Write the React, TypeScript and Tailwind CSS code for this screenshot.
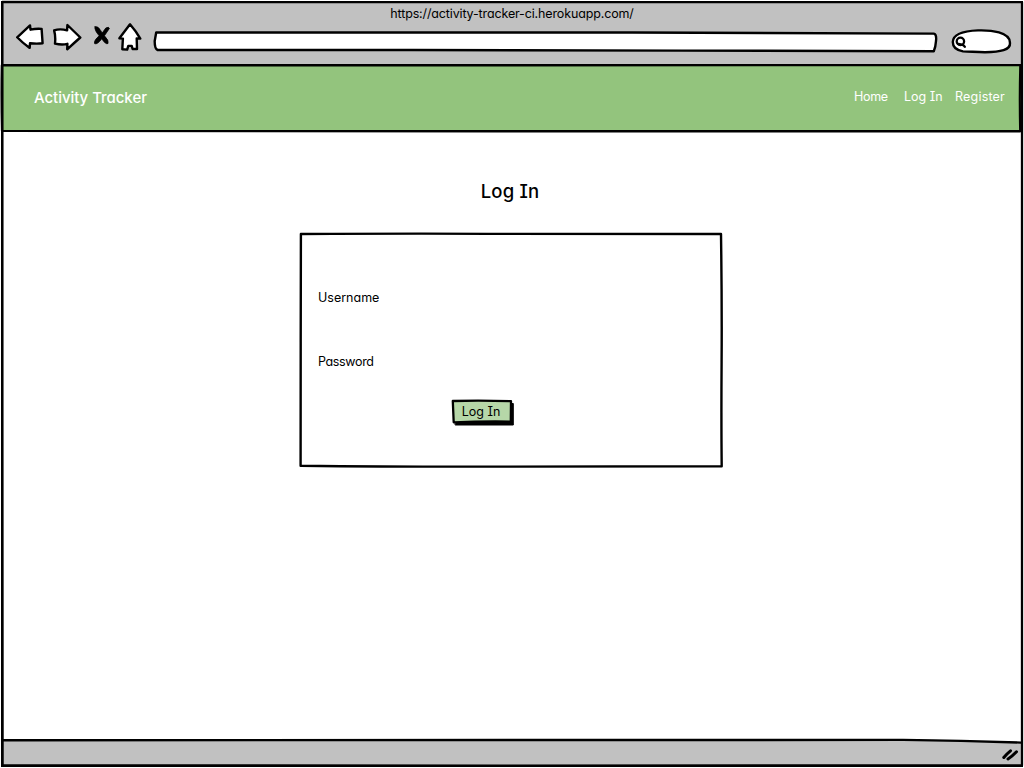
import type { ReactNode } from "react";

const sketchFont =
  "font-['Inter',sans-serif] [font-feature-settings:'cv11','cv08']";

function Ink({ w, h, children, className = "" }: { w: number; h: number; children: ReactNode; className?: string }) {
  return (
    <svg
      width={w}
      height={h}
      viewBox={`0 0 ${w} ${h}`}
      className={`block shrink-0 ${className}`}
      fill="#fff"
      stroke="#000"
      strokeWidth="2.4"
      strokeLinejoin="round"
      strokeLinecap="round"
      aria-hidden="true"
    >
      {children}
    </svg>
  );
}

function Toolbar() {
  return (
    <div className="flex h-[32px] items-start pl-[13px]">
      <Ink w={28} h={28}>
        <path d="M1.2 14.3 L14 2.4 L14.5 6.7 Q20 5.4 25.6 5.9 Q26 12 26.6 20.3 Q21 21 14 20.3 L13.7 24.9 Q6 19.5 1.2 14.3 Z" />
      </Ink>
      <Ink w={30} h={28} className="ml-[9px]">
        <path d="M27.3 14.5 L14.4 2 L14.1 7.4 Q7 5.4 1.1 7.4 Q2.8 13 2 20.6 Q9 22.2 14.4 20.8 L14.2 26.3 Q21.1 20 27.3 14.5 Z" />
      </Ink>
      <Ink w={18} h={22} className="ml-[10px] mt-[2px]">
        <path
          d="M2 1.8 Q5 .8 7.6 5.4 L9.2 8 L12.8 3 Q16 1.4 16.4 3.4 L11.4 10.8 Q16.2 15.5 15 18.5 Q12.6 19.8 8.8 13.7 Q4.2 20 1.6 18.6 Q.6 15.5 6.2 10.8 Q1 4.8 2 1.8 Z"
          fill="#000"
          strokeWidth="0.8"
        />
      </Ink>
      <Ink w={24} h={29} className="ml-[7px]">
        <path d="M12 1.3 Q7 8 1.4 15.2 L4.9 15.6 L4.3 26.3 L9.2 26.6 L10.3 22.9 L13.7 22.9 L14.6 26 L19 26 L18.7 15.5 L22.3 15.6 Q17.8 8 12 1.3 Z" />
      </Ink>
      <Ink w={786} h={24} className="ml-[10px] mt-[7px]">
        <path d="M4.2 2.5 Q250 2 480 2.5 T781.8 3.6 Q784.8 4 784 11 Q783.6 17 781.8 21.2 Q650 21 530 20.6 T260 20 Q120 20 5.6 20 Q2.6 19 2.7 11 Z" />
      </Ink>
      <Ink w={64} h={28} className="ml-[11px] mt-[5px]">
        <path d="M3.8 14 C4 6 13 3 29 2.4 C42 2 61.3 4 61 15 C61.6 22 51.5 23.8 36 24.2 C25 23.6 20 24 14 23.4 C6 22 3.8 18 3.8 14 Z" />
        <circle cx="11.4" cy="13.4" r="3.7" strokeWidth="2.3" />
        <path d="M9.4 16 L14.2 17 L15.8 18.8" fill="none" strokeWidth="2.3" />
      </Ink>
    </div>
  );
}

export default function App() {
  return (
    <div className={`relative h-[768px] w-[1024px] overflow-hidden bg-white pl-px pt-px text-black ${sketchFont}`}>
      <div className="flex h-[766px] w-[1022px] flex-col border-2 border-black bg-white">
        <header className="h-[61px] shrink-0 bg-[#c1c1c1]">
          <div className="flex h-[20px] items-center justify-center pt-[2px] text-[12.5px] tracking-[-0.14px]">
            https://activity-tracker-ci.herokuapp.com/
          </div>
          <Toolbar />
        </header>

        <nav className="relative flex h-[68px] w-[1018px] shrink-0 items-center justify-between border-y-2 border-black bg-[#93c47d] pl-[31px] pr-[15px] text-white">
          <div className="text-[15px] font-medium tracking-[-0.04px]">Activity Tracker</div>
          <div className="flex pb-px text-[12.5px]">
            <a href="#" className="w-[50px] tracking-[-0.3px]">Home</a>
            <a href="#" className="w-[51px]">Log In</a>
            <a href="#" className="w-[51px] whitespace-nowrap tracking-[0.2px]">Register</a>
          </div>
          <Ink w={1022} h={72} className="absolute -left-[3px] -top-[3px]">
            <path d="M1.8 2.4 Q300 1.7 500 2.3 T1020.3 2.2 Q1019.4 35 1020.2 68.3 Q700 67.5 500 68.3 T2 68 Q1.2 35 1.8 2.4 Z" fill="none" strokeWidth="2.2" />
          </Ink>
        </nav>

        <main className="flex flex-1 flex-col items-center">
          <h1 className="mr-[4px] mt-[45px] h-[28px] text-[18.5px] font-medium leading-[28px] tracking-[0.2px]">Log In</h1>
          <form className="relative mr-[2px] mt-[28px] h-[234px] w-[422px] px-[18px] pt-[53px]">
            <Ink w={424} h={236} className="absolute -left-px -top-px">
              <path d="M1.9 2 Q120 1.4 210 1.9 T422 2 Q423 70 422.6 130 T422.7 234.3 Q320 234.3 210 234.6 T1.6 233.7 Q1.4 160 1.7 110 T1.9 2 Z" />
            </Ink>
            <label className="relative block h-[24px] text-[12.5px] leading-[24px]">Username</label>
            <label className="relative mt-[40px] block h-[24px] text-[12.5px] leading-[24px] tracking-[-0.35px]">Password</label>
            <button type="button" className="relative ml-[133px] mt-[25px] flex h-[28px] w-[65px] items-center justify-center pb-px pr-[5px] text-[12.5px]">
              <Ink w={65} h={28} className="absolute left-0 top-0">
                <path d="M4.5 4.5 H62.3 V26 H4.5 Z" fill="#000" strokeWidth="1" />
                <path d="M1.8 2 Q30 1.2 60 2.2 L59.8 22.6 Q31 22.2 2.7 23.3 Z" fill="#b6d7a8" strokeWidth="2.3" />
              </Ink>
              <span className="relative">Log In</span>
            </button>
          </form>
        </main>

        <footer className="relative h-[25px] shrink-0">
          <Ink w={1018} h={28} className="absolute -top-[3px] left-0">
            <path d="M0 3 Q400 2.2 930 2.7 L1018 5.5 V28 H0 Z" fill="#c1c1c1" stroke="none" />
            <path d="M0 3.2 Q400 3 900 2.9 Q960 3.4 1018 5.6" fill="none" />
            <path d="M1000.8 20.5 Q1003.5 17 1007.5 13.8 M1005 22 Q1009 19.5 1013.5 14.8" fill="none" strokeWidth="3" />
          </Ink>
        </footer>
      </div>
      <Ink w={1024} h={768} className="pointer-events-none absolute left-0 top-0">
        <path d="M2.4 2 Q500 1.6 1022 2.2 Q1021.6 400 1022 765.4 Q800 766.3 500 765.6 T2.6 765.4 Q1.8 600 2.4 400 T2.4 2 Z" fill="none" strokeWidth="2.3" />
      </Ink>
    </div>
  );
}
